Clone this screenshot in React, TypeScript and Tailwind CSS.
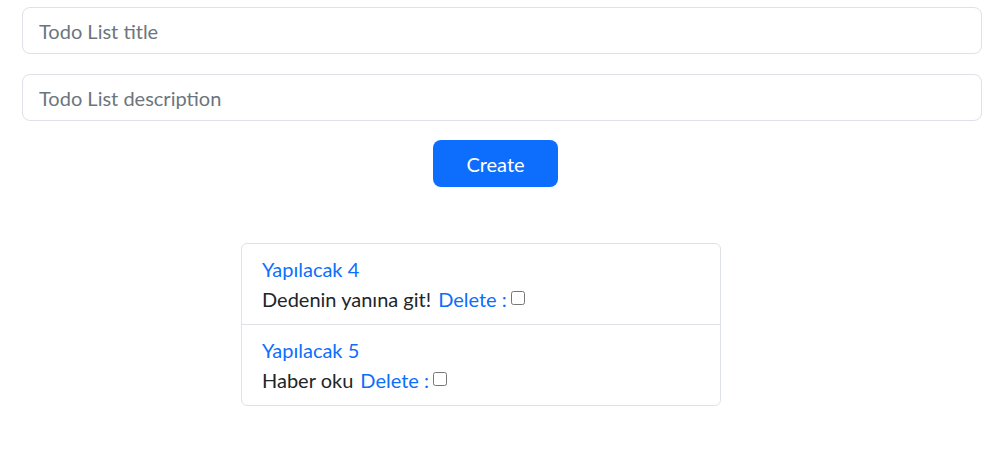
type Todo = {
  id: number;
  title: string;
  description: string;
};

const todos: Todo[] = [
  { id: 4, title: 'Yapılacak 4', description: 'Dedenin yanına git!' },
  { id: 5, title: 'Yapılacak 5', description: 'Haber oku' },
];

export default function App() {
  return (
    <div className="min-h-screen bg-white pl-[22px] pr-[20px] pt-[7px] font-['Lato',sans-serif] text-[20px] leading-[30px] text-[#212529]">

      {/* FORM */}

      <div className="flex flex-col gap-5">
        <input
          type="text"
          placeholder="Todo List title"
          className="h-[47px] w-full rounded-lg border border-[#dee2e6] px-4 outline-none placeholder:text-[#6c757d]"
        />

        <input
          type="text"
          placeholder="Todo List description"
          className="h-[47px] w-full rounded-lg border border-[#dee2e6] px-4 outline-none placeholder:text-[#6c757d]"
        />
      </div>

      <button className="mt-[19px] ml-[411px] h-[47px] w-[125px] rounded-lg bg-[#0d6efd] text-white">
        Create
      </button>

      {/* LISTE */}

      <ul className="mt-[56px] ml-[219px] w-[480px] rounded-md border border-[#dee2e6]">
        {todos.map((todo, i) => (
          <li
            key={todo.id}
            className={
              i === 0
                ? 'px-5 py-[10px]'
                : 'border-t border-[#dee2e6] px-5 py-[10px]'
            }
          >
            <div className="text-[#0d6efd]">{todo.title}</div>
            <div className="flex items-center">
              <span>{todo.description}</span>
              <span className="ml-[7px] text-[#0d6efd]">Delete :</span>
              <input type="checkbox" className="mb-[2px] ml-[4px] h-[14px] w-[14px]" />
            </div>
          </li>
        ))}
      </ul>

    </div>
  );
}
